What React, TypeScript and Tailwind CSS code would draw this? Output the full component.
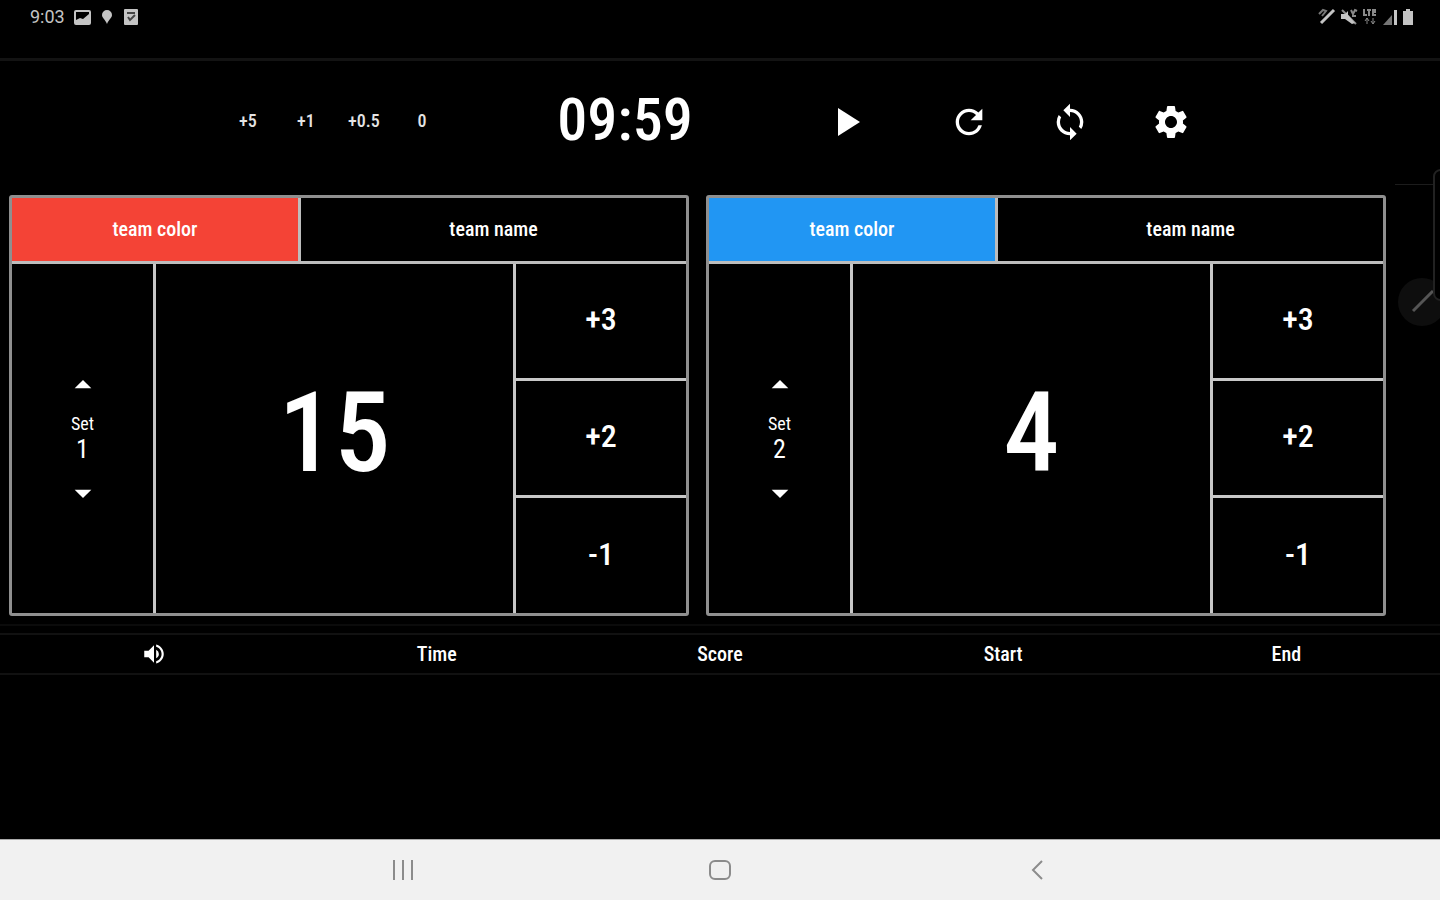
import React from 'react'
import {
  MdArrowDropDown,
  MdArrowDropUp,
  MdPlayArrow,
  MdRefresh,
  MdSettings,
  MdSync,
  MdVolumeUp,
} from 'react-icons/md'

const StatusBar = () => {
  return (
    <header className="flex h-[61px] items-start justify-between border-b-3 border-[#131313] px-[26px] pl-[30px] pt-2 text-[#c4c4c4]">
      <div className="flex h-[18px] items-center">
        <span className="w-[44px] font-['Roboto',sans-serif] text-[18px] leading-[18px]">9:03</span>
        <svg className="h-[15px] w-[17px]" viewBox="0 0 17 15" fill="none">
          <rect x="1" y="1" width="15" height="13" rx="1" stroke="currentColor" strokeWidth="2" />
          <path d="M2 13V10l4-2 3 1 6-5v9z" fill="currentColor" />
        </svg>
        <svg className="ml-[10px] h-4 w-3" viewBox="0 0 12 16" fill="currentColor">
          <path d="M6 1a5 5 0 0 1 5 5c0 3-3 4-5 9C4 10 1 9 1 6a5 5 0 0 1 5-5z" />
        </svg>
        <svg className="ml-[11px] h-4 w-[14px]" viewBox="0 0 14 16" fill="none">
          <rect width="14" height="16" rx="1" fill="currentColor" />
          <path d="M3 4h8M4 8l2 3 5-5" stroke="#444" strokeWidth="2" />
        </svg>
      </div>
      <div className="flex h-[18px] items-center gap-1">
        <svg className="h-[18px] w-[18px]" viewBox="0 0 18 18" fill="none" stroke="currentColor">
          <path d="M3 15L16 2" strokeWidth="3" />
          <path d="M1 6l4-4 3 1-4 5" strokeWidth="2" opacity=".6" />
        </svg>
        <svg className="h-[18px] w-[18px]" viewBox="0 0 18 18" fill="none" stroke="currentColor">
          <path d="M1 6h4l3-3v4l7 8-3 1-7-5H1z" fill="currentColor" stroke="none" />
          <path d="M2 2l14 14M11 2l2 4 2-4 2 1M12 8h4" strokeWidth="2" opacity=".7" />
        </svg>
        <svg className="h-[18px] w-4" viewBox="0 0 16 18" fill="none" stroke="currentColor" opacity=".7">
          <path d="M2 1v6h3M5 2h4M7 2v6M14 2h-3v5h3M11 4h3" strokeWidth="2" />
          <path d="M5 10v6M3 13l2-3 2 3M11 10v6M9 13l2 3 2-3" />
        </svg>
        <svg className="h-4 w-4" viewBox="0 0 16 16" fill="currentColor">
          <path d="M1 16L10 6v10z" opacity=".6" />
          <rect x="12" y="1" width="3" height="15" />
        </svg>
        <svg className="h-4 w-3" viewBox="0 0 12 16" fill="currentColor">
          <path d="M4 0h4v2h3v14H1V2h3z" />
        </svg>
      </div>
    </header>
  )
}

const Toolbar = () => {
  return (
    <section className="flex h-[121px] items-center px-[15.2%]">
      <div className="flex">
        {['+5', '+1', '+0.5', '0'].map((step) => (
          <button key={step} className="h-12 w-[58px] pb-[2px] text-[18px] font-medium leading-6 text-[#e4e4e4]">
            {step}
          </button>
        ))}
      </div>
      <time className="flex-1 pb-1 text-center text-[60px] font-medium leading-[60px]">09:59</time>
      <button aria-label="Play" className="mr-[21px] flex h-12 w-[98px] justify-center pr-[5px]">
        <MdPlayArrow className="size-12" />
      </button>
      <button aria-label="Restart" className="flex h-12 w-[101px] items-center justify-center">
        <MdRefresh className="size-10" />
      </button>
      <button aria-label="Swap sides" className="flex h-12 w-[101px] items-center justify-center">
        <MdSync className="size-10" />
      </button>
      <button aria-label="Settings" className="flex h-12 w-[101px] items-center justify-center">
        <MdSettings className="size-10" />
      </button>
    </section>
  )
}

type TeamProps = {
  colorClass: string
  set: number
  score: number
}

const TeamPanel = ({ colorClass, set, score }: TeamProps) => {
  return (
    <section className="rounded-[3px] border-[3px] border-[#8f8f8f]">
      <div className="grid h-[66px] grid-cols-[289fr_385fr] border-b-3 border-[#bdbdbd] text-[20px] font-medium leading-6">
        <button className={`border-r-3 border-[#bdbdbd] pb-[2px] ${colorClass}`}>team color</button>
        <button className="pb-[2px]">team name</button>
      </div>
      <div className="grid h-[349px] grid-cols-[144fr_360fr_170fr]">
        <div className="flex flex-col items-center justify-center border-r-3 border-[#c8c8c8]">
          <button aria-label="Next set">
            <MdArrowDropUp className="size-10" />
          </button>
          <div className="py-[9px] text-center">
            <p className="text-[18px] leading-5">Set</p>
            <p className="text-[26px] leading-[30px]">{set}</p>
          </div>
          <button aria-label="Previous set">
            <MdArrowDropDown className="size-10" />
          </button>
        </div>
        <button className="border-r-3 border-[#c8c8c8] pb-3 text-[112px] font-medium leading-[112px]">
          {score}
        </button>
        <div className="grid grid-rows-[117fr_117fr_115fr] text-[32px] font-medium leading-9">
          <button className="border-b-3 border-[#c8c8c8] pb-1">+3</button>
          <button className="border-b-3 border-[#c8c8c8] pb-1">+2</button>
          <button className="pb-1">-1</button>
        </div>
      </div>
    </section>
  )
}

const History = () => {
  return (
    <section className="mt-2 border-t-2 border-[#0b0b0b] pt-[7px]">
      <div className="border-y-2 border-[#111] px-3">
        <table className="w-full table-fixed text-[20px] leading-[38px]">
          <thead>
            <tr>
              <th className="p-0 font-medium">
                <button aria-label="Sound" className="flex h-[38px] w-full items-center justify-center">
                  <MdVolumeUp className="size-[26px]" />
                </button>
              </th>
              <th className="p-0 font-medium">Time</th>
              <th className="p-0 font-medium">Score</th>
              <th className="p-0 font-medium">Start</th>
              <th className="p-0 font-medium">End</th>
            </tr>
          </thead>
        </table>
      </div>
    </section>
  )
}

const NavBar = () => {
  return (
    <nav className="grid h-[61px] grid-cols-3 border-t border-[#aaa] bg-[#f1f1f1] px-[17%] text-[#8c8c8c]">
      <button aria-label="Recent apps" className="flex items-center justify-center">
        <svg className="h-5 w-5" viewBox="0 0 20 20" stroke="currentColor" strokeWidth="2">
          <path d="M1 0v20M10 0v20M19 0v20" />
        </svg>
      </button>
      <button aria-label="Home" className="flex items-center justify-center">
        <svg className="h-5 w-[22px]" viewBox="0 0 22 20" fill="none" stroke="currentColor" strokeWidth="2">
          <rect x="1" y="1" width="20" height="18" rx="5" />
        </svg>
      </button>
      <button aria-label="Back" className="flex items-center justify-center">
        <svg className="h-5 w-3" viewBox="0 0 12 20" fill="none" stroke="currentColor" strokeWidth="2">
          <path d="M11 1L2 10l9 9" />
        </svg>
      </button>
    </nav>
  )
}

const App = () => {
  return (
    <div className="relative flex min-h-screen flex-col overflow-hidden bg-black font-['Liberation_Sans_Narrow','Arial_Narrow','Roboto_Condensed','Liberation_Sans',sans-serif] text-white">
      <StatusBar />
      <Toolbar />
      <main className="flex-1">
        <div className="grid grid-cols-2 gap-[17px] pl-[9px] pr-[54px] pt-[13px]">
          <TeamPanel colorClass="bg-[#f44336]" set={1} score={15} />
          <TeamPanel colorClass="bg-[#2196f3]" set={2} score={4} />
        </div>
        <History />
      </main>
      <NavBar />

      {/* edge panel handle and pen shortcut float over the right side */}
      <div className="absolute right-0 top-[184px] h-px w-[45px] bg-[#1c1c1c]" />
      <div className="absolute -right-[6px] top-[278px] flex size-12 items-center justify-center rounded-full bg-[#0e0e0e]">
        <svg className="size-6" viewBox="0 0 24 24" stroke="#555" strokeWidth="3">
          <path d="M3 21L23 1" />
        </svg>
      </div>
      <div className="absolute -right-2 top-[169px] h-[132px] w-[15px] rounded-lg border-2 border-[#222] bg-black" />
    </div>
  )
}

export default App
